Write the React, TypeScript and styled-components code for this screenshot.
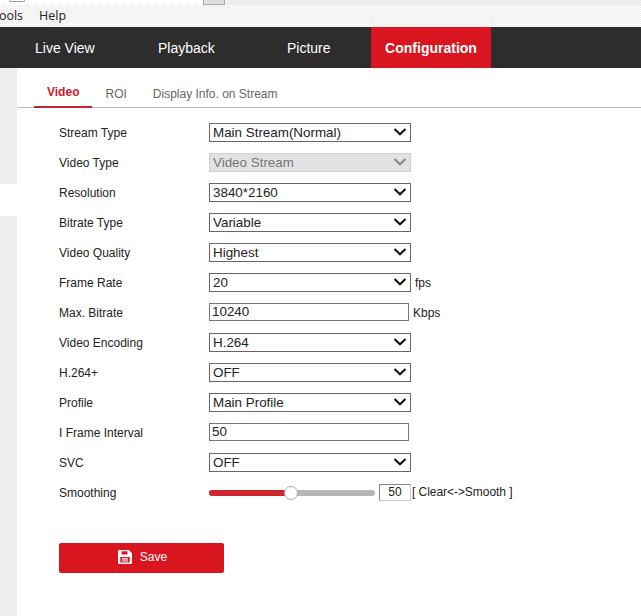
import React from "react";
import styled, { createGlobalStyle } from "styled-components";

const dither = `repeating-conic-gradient(#f6f6f6 0 25%, #e6e6e6 0 50%) 0 0 / 2px 2px`;
const ditherLight = `repeating-conic-gradient(#ffffff 0 25%, #ececec 0 50%) 0 0 / 2px 2px`;

const Global = createGlobalStyle`
  html, body { margin: 0; padding: 0; background: #fff; }
  body { width: 641px; height: 616px; overflow: hidden; font-family: "Liberation Sans", Arial, sans-serif; }
`;
const Page = styled.div`width: 641px; height: 616px; display: flex; flex-direction: column; overflow: hidden;`;
const TitleStrip = styled.div`height: 5px; background: ${dither}; display: flex; flex: none;`;
const TitleTab = styled.div`width: 203px; height: 5px; background: #fff; padding-left: 9px; box-sizing: border-box;`;
const TabIcon = styled.div`width: 16px; height: 2px; box-sizing: border-box; border: 1px solid #999; border-top: 0; border-radius: 0 0 3px 3px;`;
const TitleBtn = styled.div`width: 22px; height: 5px; background: #dedede; border: solid #aaa; border-width: 0 1px 1px; box-sizing: border-box;`;
const MenuBar = styled.div`height: 22px; flex: none; background: ${ditherLight}; display: flex; align-items: center; gap: 16px; font: 12.5px "Open Sans", "Liberation Sans", sans-serif; color: #222; overflow: hidden;`;
const MenuItem = styled.span<{ $clip?: boolean }>`margin-left: ${p => (p.$clip ? "-8px" : "0")}; line-height: 22px;`;
const Nav = styled.nav`height: 41px; background: #2d2d2d; display: flex; flex: none; padding-left: 35px;`;
const NavItem = styled.div<{ $w: number }>`width: ${p => p.$w}px; color: #fff; font-size: 14px; line-height: 43px;`;
const NavActive = styled.div`width: 120px; background: #d9161f; color: #fff; font-size: 14px; font-weight: 700; line-height: 43px; text-align: center;`;
const Body = styled.div`flex: 1; display: flex; min-height: 0;`;
const Side = styled.div`width: 17px; flex: none; display: flex; flex-direction: column;`;
const SideBlock = styled.div<{ $h?: number }>`height: ${p => (p.$h ? `${p.$h}px` : "auto")}; flex: ${p => (p.$h ? "none" : 1)}; background: ${dither};`;
const SideGap = styled.div`height: 32px; flex: none; background: #fff;`;
const Main = styled.main`flex: 1; min-width: 0;`;
const Tabs = styled.div`height: 40px; box-sizing: border-box; padding-left: 17px; border-bottom: 1px solid #bbb; display: flex; align-items: flex-end;`;
const Tab = styled.div<{ $active?: boolean }>`
  font-size: 12px; line-height: 14px; height: 26px; box-sizing: border-box;
  padding: ${p => (p.$active ? "3px 13px 0" : "5px 13px 0")};
  color: ${p => (p.$active ? "#c8202c" : "#666")};
  font-weight: ${p => (p.$active ? 700 : 400)};
  border-bottom: ${p => (p.$active ? "2px solid #c0272f" : "0")};
  margin-bottom: -1px; white-space: nowrap;
`;
const Form = styled.div`padding: 9px 0 0 42px; display: flex; flex-direction: column;`;
const Row = styled.div`height: 30px; display: flex; align-items: center; font-size: 12px; color: #222;`;
const Label = styled.div`width: 150px; flex: none; padding-top: 2px;`;
const SelectBox = styled.div<{ $disabled?: boolean }>`
  width: 202px; height: 19px; box-sizing: border-box; border: 1px solid ${p => (p.$disabled ? "#d0d0d0" : "#666")};
  background: ${p => (p.$disabled ? "#e2e2e2" : "#fff")}; color: ${p => (p.$disabled ? "#777" : "#222")};
  display: flex; align-items: center; justify-content: space-between; padding: 0 3px 0 3px; font-size: 13.4px;
`;
const TextBox = styled.div`width: 200px; height: 18px; box-sizing: border-box; border: 1px solid #777; background: #fff; color: #222; padding-left: 2px; font-size: 13.4px; line-height: 16px;`;
const Unit = styled.span`margin-left: 4px; font-size: 12px; padding-top: 1px;`;
const SliderWrap = styled.div`width: 166px; height: 16px; position: relative; flex: none;`;
const Track = styled.div`position: absolute; left: 0; right: 0; top: 6px; height: 6px; border-radius: 3px; background: #b5b5b5;`;
const Fill = styled.div`position: absolute; left: 0; top: 6px; height: 6px; border-radius: 3px 0 0 3px; background: #cf2530;`;
const Thumb = styled.div`position: absolute; left: 75px; top: 2px; width: 14px; height: 14px; border-radius: 50%; background: #fff; border: 1px solid #aaa; box-sizing: border-box;`;
const SmallBox = styled.div`width: 32px; height: 17px; margin-left: 4px; box-sizing: border-box; border: 1px solid #888; border-right-color: #ccc; border-bottom-color: #ccc; text-align: center; line-height: 15px; font-size: 12px; color: #222;`;
const Hint = styled.span`margin-left: 1px; font-size: 12px; letter-spacing: -0.05px;`;
const SaveBtn = styled.button`
  width: 165px; height: 30px; margin: 36px 0 0 0; border: 0; border-radius: 2px; background: #d9161f; color: #fff;
  font: 12px "Liberation Sans", Arial, sans-serif; display: flex; align-items: center; justify-content: center; gap: 8px; padding: 0 0 2px 2px;
`;

const Chevron = ({ color = "#111" }: { color?: string }) => (
  <svg width="14" height="8" viewBox="0 0 14 8" fill="none"><path d="M1.5 1 L7 6.3 L12.5 1" stroke={color} strokeWidth="2" /></svg>
);
const SaveIcon = () => (
  <svg width="14" height="14" viewBox="0 0 14 14"><path fillRule="evenodd" fill="#fff" d="M1.2 0H10.8L14 3.2V12.8A1.2 1.2 0 0 1 12.8 14H1.2A1.2 1.2 0 0 1 0 12.8V1.2A1.2 1.2 0 0 1 1.2 0ZM3.5 1.3V4.6H9.5V1.3ZM2.3 7V12.6H11.7V7ZM4 8.3H10V9.4H4ZM4 10.4H10V11.5H4Z" /></svg>
);
const Select = ({ value, disabled }: { value: string; disabled?: boolean }) => (
  <SelectBox $disabled={disabled}><span>{value}</span><Chevron color={disabled ? "#888" : "#111"} /></SelectBox>
);
const rows: { label: string; value: string; disabled?: boolean; input?: boolean; unit?: string }[] = [
  { label: "Stream Type", value: "Main Stream(Normal)" },
  { label: "Video Type", value: "Video Stream", disabled: true },
  { label: "Resolution", value: "3840*2160" },
  { label: "Bitrate Type", value: "Variable" },
  { label: "Video Quality", value: "Highest" },
  { label: "Frame Rate", value: "20", unit: "fps" },
  { label: "Max. Bitrate", value: "10240", input: true, unit: "Kbps" },
  { label: "Video Encoding", value: "H.264" },
  { label: "H.264+", value: "OFF" },
  { label: "Profile", value: "Main Profile" },
  { label: "I Frame Interval", value: "50", input: true },
  { label: "SVC", value: "OFF" },
];

export default function App() {
  return (
    <Page>
      <Global />
      <TitleStrip><TitleTab><TabIcon /></TitleTab><TitleBtn /></TitleStrip>
      <MenuBar><MenuItem $clip>Tools</MenuItem><MenuItem>Help</MenuItem></MenuBar>
      <Nav>
        <NavItem $w={123}>Live View</NavItem>
        <NavItem $w={129}>Playback</NavItem>
        <NavItem $w={84}>Picture</NavItem>
        <NavActive>Configuration</NavActive>
      </Nav>
      <Body>
        <Side><SideBlock $h={116} /><SideGap /><SideBlock /></Side>
        <Main>
          <Tabs>
            <Tab $active>Video</Tab>
            <Tab>ROI</Tab>
            <Tab>Display Info. on Stream</Tab>
          </Tabs>
          <Form>
            {rows.map(r => (
              <Row key={r.label}>
                <Label>{r.label}</Label>
                {r.input ? <TextBox>{r.value}</TextBox> : <Select value={r.value} disabled={r.disabled} />}
                {r.unit && <Unit>{r.unit}</Unit>}
              </Row>
            ))}
            <Row>
              <Label>Smoothing</Label>
              <SliderWrap><Track /><Fill style={{ width: 78 }} /><Thumb /></SliderWrap>
              <SmallBox>50</SmallBox>
              <Hint>[ Clear&lt;-&gt;Smooth ]</Hint>
            </Row>
            <SaveBtn><SaveIcon /><span>Save</span></SaveBtn>
          </Form>
        </Main>
      </Body>
    </Page>
  );
}
